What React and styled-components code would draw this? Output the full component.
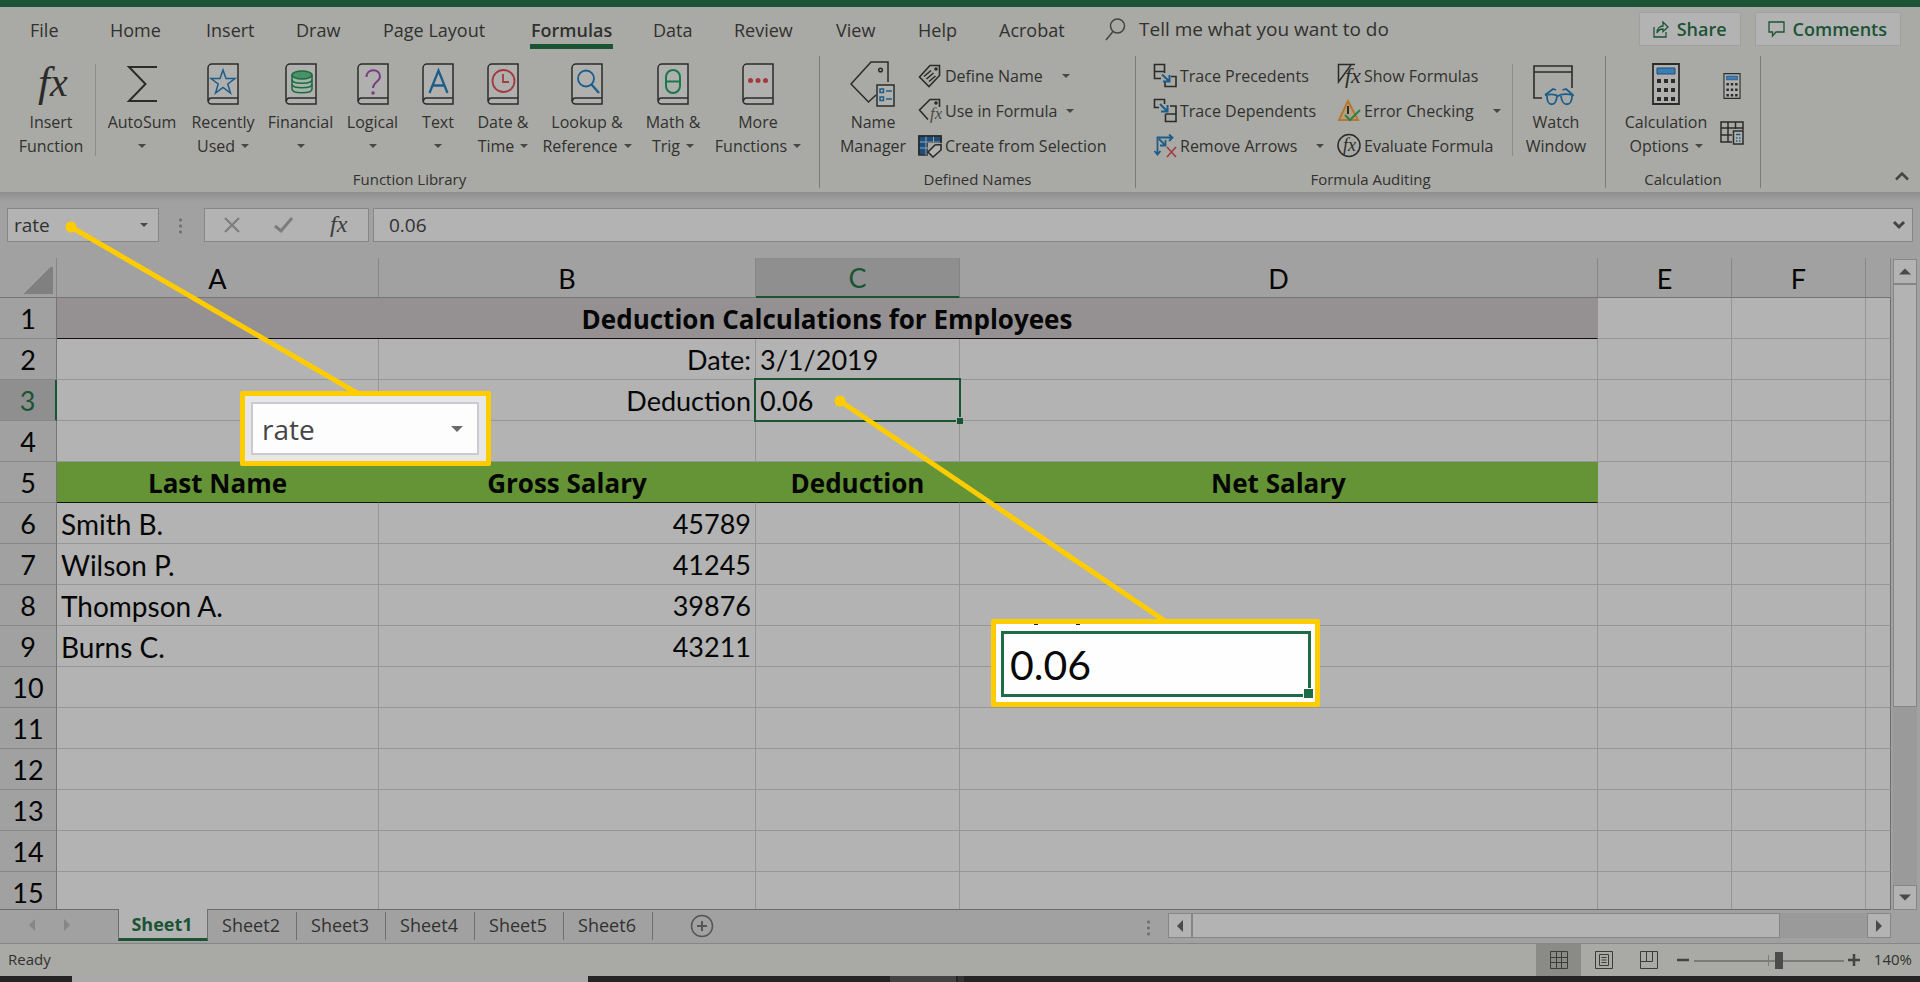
import React from 'react';
import styled, { createGlobalStyle, css } from 'styled-components';

const c = {
  ink: '#2b2b2a',
  text: '#31312f',
  ribbon: '#a9aaa5',
  chrome: '#a1a1a1',
  cell: '#b3b3b3',
  line: '#969696',
  edge: '#868686',
  green: '#1b5434',
  blue: '#1d5d8a',
  red: '#a33a3f',
  yellow: '#ffcc00',
};

const Global = createGlobalStyle`
  *, *::before, *::after { box-sizing: border-box; }
  body { margin: 0; background: ${c.chrome}; }
  button, input { font: inherit; color: inherit; background: none; border: 0; padding: 0; margin: 0; }
  svg { display: block; flex: none; }
`;

const Window = styled.div`
  position: relative;
  display: flex;
  flex-direction: column;
  height: 100vh;
  overflow: hidden;
  font-family: "Open Sans", "Noto Sans", sans-serif;
  font-size: 16px;
  color: ${c.text};
`;

const TitleStrip = styled.div`
  flex: none;
  height: 7px;
  background: ${c.green};
`;

/* ---------- ribbon ---------- */

const Ribbon = styled.header`
  flex: none;
  height: 185px;
  background: ${c.ribbon};
`;

const TabBar = styled.nav`
  display: flex;
  align-items: flex-start;
  height: 49px;
  padding: 5px 19px 0 29px;
  font-size: 18px;
  line-height: 34px;
`;

const TabSlot = styled.div`
  flex: none;
  width: ${(p) => p.$w}px;
`;

const Tab = styled.button`
  height: 37px;
  line-height: 34px;
  padding: 1px 1px 0;
  white-space: nowrap;
  border-bottom: 5px solid transparent;
  ${(p) =>
    p.$active &&
    css`
      font-weight: 600;
      border-bottom-color: ${c.green};
    `}
`;

const Search = styled.label`
  display: flex;
  gap: 13px;
  flex: 1;
  align-items: center;
  height: 34px;
  font-size: 19px;
`;

const SearchInput = styled.input`
  flex: 1;
  min-width: 0;
  outline: 0;
  &::placeholder { color: ${c.text}; opacity: 1; }
`;

const TopButton = styled.button`
  display: flex;
  align-items: center;
  gap: 8px;
  height: 34px;
  padding: 0 13px 0 12px;
  margin-left: 14px;
  background: ${c.cell};
  border: 1px solid #a0a19e;
  font-weight: 600;
  color: ${c.green};
`;

const Groups = styled.div`
  display: flex;
  height: 132px;
`;

const Group = styled.section`
  flex: none;
  display: flex;
  flex-direction: column;
  justify-content: space-between;
  width: ${(p) => p.$w}px;
  border-right: 1px solid #7b7b79;
`;

const GroupBody = styled.div`
  display: flex;
  height: 108px;
  padding-left: ${(p) => p.$pl}px;
`;

const GroupTitle = styled.h2`
  margin: 0;
  font-size: 15px;
  line-height: 18px;
  font-weight: 400;
  text-align: center;
  height: 18px;
`;

const BigButton = styled.button`
  flex: none;
  display: flex;
  flex-direction: column;
  align-items: center;
  width: ${(p) => p.$w}px;
  padding-top: 5px;
  line-height: 24px;
  white-space: nowrap;
`;

const BigIcon = styled.span`
  display: flex;
  align-items: center;
  justify-content: center;
  height: 46px;
  margin-bottom: 3px;
`;

const Line = styled.span`
  display: flex;
  align-items: center;
  gap: 6px;
  height: 24px;
`;

const Caret = styled.span`
  width: 0;
  height: 0;
  border: 4px solid transparent;
  border-top-color: #474746;
  border-bottom: 0;
`;

const Divider = styled.span`
  flex: none;
  width: 1px;
  height: 92px;
  margin: 8px 3px 0;
  background: #8d8e8a;
`;

const Stack = styled.div`
  flex: none;
  width: ${(p) => p.$w}px;
  padding-top: 2px;
`;

const SmallButton = styled.button`
  display: flex;
  align-items: center;
  gap: 3px;
  height: 35px;
  white-space: nowrap;
`;

const CaretGap = styled.span`
  display: flex;
  margin-left: ${(p) => p.$gap}px;
`;

const IconStack = styled.div`
  display: flex;
  flex-direction: column;
  align-items: center;
  gap: 22px;
  padding-top: 17px;
  width: 34px;
`;

const Collapse = styled.button`
  margin: auto 11px 7px auto;
`;

/* ---------- formula bar ---------- */

const FormulaBar = styled.div`
  flex: none;
  display: flex;
  height: 66px;
  padding: 16px 7px 16px 7px;
  background: linear-gradient(#8f8f8f, ${c.chrome} 10px);
  font-size: 19px;
`;

const Box = styled.div`
  display: flex;
  align-items: center;
  height: 34px;
  background: ${c.cell};
  border: 1px solid ${c.edge};
`;

const NameBox = styled(Box)`
  width: 152px;
  padding: 0 10px 0 6px;
`;

const BareInput = styled.input`
  flex: 1;
  min-width: 0;
  outline: 0;
`;

const Dots = styled.span`
  width: 3px;
  height: 17px;
  margin: 9px ${(p) => p.$right}px 0 ${(p) => p.$left}px;
  background: radial-gradient(circle, #6f6f6f 1px, transparent 2px) 0 0 / 3px 6px;
`;

const FxBox = styled(Box)`
  width: 165px;
  margin-right: 4px;
  padding: 0 16px 0 18px;
  justify-content: space-between;
`;

const FormulaBox = styled(Box)`
  flex: 1;
  padding: 0 6px 0 15px;
`;

/* ---------- sheet ---------- */

const SheetArea = styled.main`
  flex: 1;
  min-height: 0;
  display: flex;
  background: ${c.chrome};
`;

const GridWrap = styled.div`
  flex: 1;
  min-width: 0;
  overflow: hidden;
  border-bottom: 1px solid #6c6c6c;
`;

const Grid = styled.table`
  width: 100%;
  table-layout: fixed;
  border-collapse: separate;
  border-spacing: 0;
  font-family: Lato, "Open Sans", sans-serif;
  font-size: 27px;
  line-height: 38px;
  color: #060606;
`;

const ColHead = styled.th`
  height: 40px;
  padding: 1px 0 0;
  line-height: 37px;
  font-weight: 400;
  background: ${(p) => (p.$on ? '#8f8f8f' : c.chrome)};
  color: ${(p) => (p.$on ? c.green : 'inherit')};
  border-right: 1px solid ${c.edge};
  border-bottom: ${(p) => (p.$on ? `2px solid ${c.green}` : '1px solid #757575')};
`;

const Corner = styled(ColHead)`
  background: linear-gradient(135deg, transparent 50%, #808080 50%) 22px 9px / 31px 27px no-repeat;
`;

const RowHead = styled.th`
  height: 41px;
  padding: 2px 0 0;
  font-weight: 400;
  background: ${(p) => (p.$on ? '#8f8f8f' : c.chrome)};
  color: ${(p) => (p.$on ? c.green : 'inherit')};
  border-bottom: 1px solid ${c.edge};
  border-right: ${(p) => (p.$on ? `2px solid ${c.green}` : '1px solid #757575')};
`;

const Cell = styled.td`
  position: relative;
  height: 41px;
  padding: 2px 4px 0;
  white-space: nowrap;
  font-size: ${(p) => (p.$label ? 28 : 27)}px;
  text-align: ${(p) => p.$align || 'left'};
  background: ${c.cell};
  border-right: 1px solid ${(p) => (p.$edge ? '#6c6c6c' : c.line)};
  border-bottom: 1px solid ${c.line};
  ${(p) =>
    p.$fill &&
    css`
      background: ${p.$fill};
      font-family: "Open Sans", "Noto Sans", sans-serif;
      font-size: 26px;
      font-weight: 700;
      text-align: center;
      border-right-color: ${p.$fill};
      border-bottom-color: #111;
    `}
`;

const Selection = styled.span`
  position: absolute;
  z-index: 1;
  inset: -2px;
  border: 2px solid ${c.green};
  &::after {
    content: '';
    position: absolute;
    right: -4px;
    bottom: -4px;
    width: 7px;
    height: 7px;
    background: ${c.green};
    border-left: 1px solid ${c.cell};
    border-top: 1px solid ${c.cell};
  }
`;

const VScroll = styled.div`
  flex: none;
  display: flex;
  flex-direction: column;
  width: 24px;
  margin: 1px 3px 0 2px;
  background: #9a9a9a;
`;

const ScrollButton = styled.button`
  flex: none;
  display: flex;
  align-items: center;
  justify-content: center;
  width: 24px;
  height: 25px;
  background: ${c.cell};
  border: 1px solid ${c.edge};
`;

const Thumb = styled.div`
  flex: 0 0 ${(p) => p.$size};
  background: ${c.cell};
  border: 1px solid ${c.edge};
`;

const Fill = styled.div`
  flex: 1;
`;

/* ---------- sheet tabs ---------- */

const SheetBar = styled.div`
  flex: none;
  display: flex;
  height: 33px;
  padding-right: 29px;
  background: ${c.chrome};
  font-size: 18px;
`;

const SheetNav = styled.div`
  display: flex;
  align-items: center;
  gap: 29px;
  width: 118px;
  padding: 0 0 3px 29px;
`;

const SheetTab = styled.button`
  width: 89px;
  height: 28px;
  margin-top: 2px;
  padding: 0 2px 2px 0;
  line-height: 26px;
  border-right: 1px solid #6f6f6f;
  ${(p) =>
    p.$active &&
    css`
      width: 90px;
      height: 32px;
      margin-top: -1px;
      padding: 0 2px 0 0;
      font-weight: 700;
      color: ${c.green};
      background: ${c.cell};
      border-left: 1px solid #6f6f6f;
      border-bottom: 3px solid ${c.green};
    `}
`;

const AddSheet = styled.button`
  margin: 0 auto 0 37px;
  padding-bottom: 1px;
`;

const HScroll = styled.div`
  display: flex;
  flex: 0 1 723px;
  margin-top: 3px;
  height: 25px;
  background: #9a9a9a;
`;

/* ---------- status bar ---------- */

const Status = styled.footer`
  flex: none;
  display: flex;
  align-items: center;
  height: 33px;
  padding: 0 8px;
  background: ${c.ribbon};
  border-top: 1px solid ${c.edge};
  font-size: 15px;
`;

const ViewButton = styled.button`
  display: flex;
  align-items: center;
  justify-content: center;
  width: 45px;
  height: 32px;
  background: ${(p) => (p.$on ? '#8a8b87' : 'none')};
`;

const ZoomButton = styled.button`
  display: flex;
  align-items: center;
  width: 12px;
  height: 24px;
  margin-left: ${(p) => p.$ml}px;
`;

const ZoomRange = styled.input`
  appearance: none;
  width: 150px;
  height: 20px;
  margin-left: 5px;
  background:
    linear-gradient(#7b7b79, #7b7b79) 74px 5px / 1px 11px no-repeat,
    linear-gradient(#7b7b79, #7b7b79) 0 10px / 100% 2px no-repeat;
  &::-webkit-slider-thumb {
    appearance: none;
    width: 8px;
    height: 17px;
    background: #4c4c4a;
  }
`;

const StatusText = styled.span`
  padding-bottom: 2px;
`;

const ZoomValue = styled(StatusText)`
  width: 52px;
  text-align: right;
`;

const Taskbar = styled.div`
  flex: none;
  display: flex;
  height: 6px;
  background: #242424;
`;

const TaskPart = styled.span`
  width: ${(p) => p.$w}px;
  margin-left: ${(p) => p.$ml}px;
  background: ${(p) => p.$bg};
`;

/* ---------- callouts laid over the window ---------- */

const Leaders = styled.svg`
  position: absolute;
  z-index: 2;
  left: 0;
  top: 0;
  pointer-events: none;
`;

const Callout = styled.div`
  position: absolute;
  z-index: 3;
  left: ${(p) => p.$x}px;
  top: ${(p) => p.$y}px;
  border: 5px solid ${c.yellow};
  border-radius: 2px;
`;

const NameCallout = styled(Callout)`
  width: 251px;
  height: 75px;
  padding: 6px 7px 6px 6px;
  background: #e8e7e7;
`;

const NameZoom = styled.div`
  display: flex;
  align-items: center;
  justify-content: space-between;
  height: 53px;
  padding: 0 14px 0 9px;
  background: #fdfdfd;
  border: 2px solid #cbc9d1;
  font-size: 28px;
  color: #454545;
`;

const BigCaret = styled(Caret)`
  border-width: 6px 6px 0;
  border-top-color: #6a6a6a;
`;

const CellCallout = styled(Callout)`
  width: 329px;
  height: 88px;
  padding: 7px 4px 5px 5px;
  background:
    linear-gradient(#222, #222) 38px 0 / 4px 1px no-repeat,
    linear-gradient(#222, #222) 80px 0 / 4px 1px no-repeat,
    #fefefe;
`;

const CellZoom = styled.div`
  position: relative;
  height: 66px;
  padding-left: 6px;
  line-height: 62px;
  border: 3px solid #1f6b45;
  font-family: Lato, "Open Sans", sans-serif;
  font-size: 41px;
  color: #080808;
  &::after {
    content: '';
    position: absolute;
    right: -6px;
    bottom: -5px;
    width: 11px;
    height: 11px;
    background: #1f6b45;
    border: 1px solid #fefefe;
  }
`;

/* ---------- icons ---------- */

const Fx = ({ x, y, size, color = c.ink }) => (
  <text x={x} y={y} fontFamily="Liberation Serif, serif" fontStyle="italic" fontSize={size} fill={color}>fx</text>
);

const Book = ({ children }) => (
  <svg width="32" height="42" viewBox="0 0 32 42" fill="none" stroke={c.ink} strokeWidth="1.5">
    <path d="M5 1H31V41H4.5A3.5 3.5 0 0 1 1 37.5V5A4 4 0 0 1 5 1Z" fill="#b0b0ae" />
    <path d="M31 35H4.500A3 3 0 0 0 1.500 38" />
    {children}
  </svg>
);

const FxIcon = () => (
  <svg width="48" height="60" viewBox="0 0 48 60">
    <text x="11" y="42" fontFamily="Liberation Serif, serif" fontStyle="italic" fontSize="43" fill={c.ink}>f</text>
    <text x="23" y="42" fontFamily="Liberation Serif, serif" fontStyle="italic" fontSize="40" fill={c.ink}>x</text>
  </svg>
);

const SigmaIcon = () => (
  <svg width="32" height="38" viewBox="0 0 32 38" fill="none" stroke={c.ink} strokeWidth="2">
    <path d="M31 2H3L19.500 19L3 36H31" />
  </svg>
);

const RecentIcon = () => (
  <Book>
    <path d="M16 7L19 15.500H28L20.800 21L23.500 30L16 24.500L8.500 30L11.200 21L4 15.500H13Z" stroke={c.blue} />
  </Book>
);

const FinancialIcon = () => (
  <Book>
    <g stroke="#1c6b42">
      <path d="M7 12V26C7 31 27 31 27 26V12" fill="#a3b5a8" />
      <ellipse cx="17" cy="12" rx="10" ry="4" fill="#4c9068" />
      <path d="M7 16.500C7 21.500 27 21.500 27 16.500M7 21C7 26 27 26 27 21" />
    </g>
  </Book>
);

const LogicalIcon = () => (
  <Book>
    <path d="M9.500 14C9.500 5 23 5 23 13.500C23 19 16 18.500 16 25" stroke="#7b3a86" strokeWidth="2" />
    <circle cx="16" cy="30" r="1" fill="#7b3a86" stroke="#7b3a86" />
  </Book>
);

const TextIcon = () => (
  <Book>
    <path d="M7.500 30L16.500 7.500L25.500 30M10.500 22.500H22.500" stroke={c.blue} strokeWidth="2.300" />
  </Book>
);

const DateIcon = () => (
  <Book>
    <circle cx="16.500" cy="18" r="11" stroke={c.red} strokeWidth="1.800" />
    <path d="M16 11V19H22" stroke={c.red} strokeWidth="1.800" />
  </Book>
);

const LookupIcon = () => (
  <Book>
    <circle cx="15" cy="15.500" r="8" stroke={c.blue} strokeWidth="1.800" />
    <path d="M20.500 21.500L28 30" stroke={c.blue} strokeWidth="2.300" />
  </Book>
);

const MathIcon = () => (
  <Book>
    <rect x="9" y="7" width="14" height="23" rx="7" stroke="#18794a" strokeWidth="2" />
    <path d="M9 18.500H23" stroke="#18794a" strokeWidth="2" />
  </Book>
);

const MoreIcon = () => (
  <Book>
    <g fill={c.red} stroke="none">
      <circle cx="8.500" cy="17.500" r="2.500" />
      <circle cx="16" cy="17.500" r="2.500" />
      <circle cx="23.500" cy="17.500" r="2.500" />
    </g>
  </Book>
);

const NameManagerIcon = () => (
  <svg width="46" height="46" viewBox="0 0 46 46" fill="none" stroke={c.ink} strokeWidth="1.500">
    <path d="M38 21V1H21L1 23L18.500 41L26 34" />
    <circle cx="30.500" cy="9" r="1.800" />
    <path d="M27 24H44V45H27Z" fill="#b0b0ae" />
    <g stroke={c.blue}>
      <path d="M30 28H33.500V31.500H30ZM30 36H33.500V39.500H30ZM36 30H42M36 38H42" />
    </g>
  </svg>
);

const DefineIcon = () => (
  <svg width="24" height="24" viewBox="0 0 24 24" fill="none" stroke={c.ink} strokeWidth="1.600">
    <path d="M12 1.500H21.500V11.500L11 22.500L1.500 13Z" />
    <circle cx="18" cy="5" r="1" fill={c.ink} />
    <path d="M6 12.500L13 6.500M8.500 15L15.500 9M11 17.500L17.500 12" />
  </svg>
);

const UseIcon = () => (
  <svg width="24" height="25" viewBox="0 0 24 25" fill="none" stroke={c.ink} strokeWidth="1.600">
    <path d="M21.500 9V1.500H12L1.500 12L10 21.500" />
    <circle cx="18" cy="5" r="1" fill={c.ink} />
    <g stroke="none"><Fx x="12" y="21" size="17" color="#4a4a48" /></g>
  </svg>
);

const CreateIcon = () => (
  <svg width="24" height="24" viewBox="0 0 24 24" fill="none" stroke={c.ink} strokeWidth="1.600">
    <path d="M1 2H23V8H9V21H1Z" fill="#1c4f7d" />
    <path d="M1 8H23M1 14H11M8 2V21M15.500 2V8" stroke="#8fa6b8" strokeWidth="1" />
    <path d="M1 21V2H23V9" />
    <path d="M17 11L23 10.500V16L15 23L10 18Z" fill={c.cell} />
  </svg>
);

const PrecedentsIcon = () => (
  <svg width="24" height="25" viewBox="0 0 24 25" fill="none" stroke={c.ink} strokeWidth="1.600">
    <path d="M8 15.500H1.500V1.500H11.500V10M1.500 8.500H11.500M18 13.500H23V23.500H12V18" />
    <path d="M9 11.500L16 18M16.500 12V18.500H10" stroke={c.blue} strokeWidth="2" />
  </svg>
);

const DependentsIcon = () => (
  <svg width="24" height="25" viewBox="0 0 24 25" fill="none" stroke={c.ink} strokeWidth="1.600">
    <path d="M6 9.500H1.500V1.500H11.500V6M17 8H23V23.500H12.500V16M12.500 16H23" />
    <path d="M7 6L14 13M14.500 7V13.500H8" stroke={c.blue} strokeWidth="2" />
  </svg>
);

const RemoveIcon = () => (
  <svg width="24" height="24" viewBox="0 0 24 24" fill="none" strokeWidth="1.800">
    <g stroke={c.blue}>
      <path d="M4.500 20V3.500H19M16 0.500L19.500 3.500L16 7M1.500 17L4.500 20.500L7.500 17M6 5L12 11M12.500 6V11.500H7" />
    </g>
    <path d="M14 13L23 23M23 13L14 23" stroke={c.red} strokeWidth="1.600" />
  </svg>
);

const ShowIcon = () => (
  <svg width="24" height="25" viewBox="0 0 24 25" fill="none" stroke={c.ink} strokeWidth="1.500">
    <path d="M18 1.500H1.500V19L14 2" />
    <g stroke="none"><Fx x="8" y="20" size="22" /></g>
  </svg>
);

const ErrorIcon = () => (
  <svg width="24" height="25" viewBox="0 0 24 25" fill="none" strokeWidth="2">
    <path d="M11 3L21 22H2Z" fill="#b5a182" stroke="#b87730" />
    <path d="M11 8V16" stroke={c.ink} />
    <path d="M8 17L13 22L23 12" stroke="#26834c" />
  </svg>
);

const EvaluateIcon = () => (
  <svg width="24" height="25" viewBox="0 0 24 25" fill="none" stroke={c.ink} strokeWidth="1.500">
    <circle cx="12" cy="12.500" r="11" />
    <g stroke="none"><Fx x="6" y="17.500" size="18" /></g>
  </svg>
);

const WatchIcon = () => (
  <svg width="46" height="46" viewBox="0 0 46 46" fill="none" stroke={c.ink} strokeWidth="1.600">
    <path d="M39 27V5H1V37H9M1 11H39" />
    <g stroke={c.blue} strokeWidth="1.800">
      <path d="M12 34L20 28L23 29M40 34L33 28L29.500 29M12 34.500C17 33 22 33 25 35C28 33 35 33 41 34.500" />
      <path d="M14 35C14 46 23 46 24 35M28 35C29 46 39 46 39 35" />
    </g>
  </svg>
);

const CalcIcon = ({ w = 28, h = 42 }) => (
  <svg width={w} height={h} viewBox="0 0 28 42" fill="none">
    <path d="M1 1H27V41H1Z" stroke={c.ink} strokeWidth="1.800" fill="#b0b0ae" />
    <path d="M5 5H23V11H5Z" fill="#3b7eb3" stroke="#1c4f7d" />
    <path d="M5 16H9V20H5ZM12 16H16V20H12ZM19 16H23V20H19ZM5 25H9V29H5ZM12 25H16V29H12ZM19 25H23V29H19ZM5 34H9V38H5ZM12 34H16V38H12ZM19 34H23V38H19Z" fill={c.ink} />
  </svg>
);

const CalcSheetIcon = () => (
  <svg width="24" height="24" viewBox="0 0 24 24" fill="none" stroke={c.ink} strokeWidth="1.500">
    <path d="M12 21H1V1H23V9M1 7H23M1 14H12M8 1V21M15.500 1V8" />
    <path d="M13.500 10H23V23H13.500Z" fill="#b0b0ae" />
    <path d="M16 13.500H20.500M16 17H17.500M19 17H20.500M16 20H17.500M19 20H20.500" stroke={c.blue} />
  </svg>
);

const Tri = ({ d, color = '#4a4a4a', w = 12, h = 12 }) => (
  <svg width={w} height={h} viewBox="0 0 12 12" preserveAspectRatio="none" fill={color}><path d={d} /></svg>
);

/* ---------- data ---------- */

const TABS = [
  ['File', 80], ['Home', 96], ['Insert', 90], ['Draw', 87], ['Page Layout', 148],
  ['Formulas', 122], ['Data', 81], ['Review', 102], ['View', 82], ['Help', 81], ['Acrobat', 107],
];

const LIBRARY = [
  [SigmaIcon, 86, 'AutoSum', '', true],
  [RecentIcon, 76, 'Recently', 'Used', true],
  [FinancialIcon, 79, 'Financial', '', true],
  [LogicalIcon, 65, 'Logical', '', true],
  [TextIcon, 66, 'Text', '', true],
  [DateIcon, 64, 'Date &', 'Time', true],
  [LookupIcon, 104, 'Lookup &', 'Reference', true],
  [MathIcon, 68, 'Math &', 'Trig', true],
  [MoreIcon, 102, 'More', 'Functions', true],
];

const NAMES = [
  [DefineIcon, 'Define Name', 16],
  [UseIcon, 'Use in Formula', 6],
  [CreateIcon, 'Create from Selection'],
];
const TRACE = [
  [PrecedentsIcon, 'Trace Precedents'],
  [DependentsIcon, 'Trace Dependents'],
  [RemoveIcon, 'Remove Arrows', 16],
];
const AUDIT = [
  [ShowIcon, 'Show Formulas'],
  [ErrorIcon, 'Error Checking', 16],
  [EvaluateIcon, 'Evaluate Formula'],
];

const COLUMNS = [['A', 322], ['B', 377], ['C', 204], ['D', null], ['E', 134], ['F', 134], ['', 25]];

const VALUES = {
  B2: 'Date:', C2: '3/1/2019', B3: 'Deduction', C3: '0.06',
  A5: 'Last Name', B5: 'Gross Salary', C5: 'Deduction', D5: 'Net Salary',
  A6: 'Smith B.', B6: '45789', A7: 'Wilson P.', B7: '41245',
  A8: 'Thompson A.', B8: '39876', A9: 'Burns C.', B9: '43211',
};

const Big = ({ item: [Icon, w, a, b, menu] }) => (
  <BigButton type="button" $w={w}>
    <BigIcon><Icon /></BigIcon>
    <Line>{a}</Line>
    <Line>{b}{menu && <Caret />}</Line>
  </BigButton>
);

const SmallStack = ({ w, items }) => (
  <Stack $w={w}>
    {items.map(([Icon, label, gap]) => (
      <SmallButton type="button" key={label}>
        <Icon />
        {label}
        {gap && <CaretGap $gap={gap}><Caret /></CaretGap>}
      </SmallButton>
    ))}
  </Stack>
);

const Row = ({ n }) => (
  <tr>
    <RowHead scope="row" $on={n === 3}>{n}</RowHead>
    {n === 1 && <Cell colSpan={4} $fill="#959192">Deduction Calculations for Employees</Cell>}
    {COLUMNS.map(([col], i) => {
      if (n === 1 && i < 4) return null;
      const fill = n === 5 && i < 4 ? '#649435' : undefined;
      return (
        <Cell key={i} $fill={fill} $edge={i === 6} $label={i === 0} $align={col === 'B' ? 'right' : 'left'}>
          {VALUES[col + n]}
          {col === 'C' && n === 3 && <Selection />}
        </Cell>
      );
    })}
  </tr>
);

export default function App() {
  return (
    <Window>
      <Global />
      <TitleStrip />
      <Ribbon>
        <TabBar>
          {TABS.map(([label, w]) => (
            <TabSlot key={label} $w={w}>
              <Tab type="button" $active={label === 'Formulas'}>{label}</Tab>
            </TabSlot>
          ))}
          <Search>
            <svg width="21" height="23" viewBox="0 0 21 23" fill="none" stroke="#444" strokeWidth="1.500">
              <circle cx="12.500" cy="8" r="7" />
              <path d="M8 13.500L1 22" />
            </svg>
            <SearchInput aria-label="Search" placeholder="Tell me what you want to do" />
          </Search>
          <TopButton type="button">
            <svg width="17" height="18" viewBox="0 0 17 18" fill="none" stroke={c.green} strokeWidth="1.300">
              <path d="M2 7V17H14V12" />
              <path d="M5 13C5 8 8 6 11 6V2L16 7L11 11.500V9C8 9 6 10 5 13Z" />
            </svg>
            Share
          </TopButton>
          <TopButton type="button">
            <svg width="17" height="18" viewBox="0 0 17 18" fill="none" stroke={c.green} strokeWidth="1.300">
              <path d="M1 2H16V12H8L4.500 16V12H1Z" />
            </svg>
            Comments
          </TopButton>
        </TabBar>
        <Groups>
          <Group $w={820}>
            <GroupBody $pl={10}>
              <Big item={[FxIcon, 82, 'Insert', 'Function', false]} />
              <Divider />
              {LIBRARY.map((item) => <Big key={item[2]} item={item} />)}
            </GroupBody>
            <GroupTitle>Function Library</GroupTitle>
          </Group>
          <Group $w={316}>
            <GroupBody $pl={8}>
              <Big item={[NameManagerIcon, 90, 'Name', 'Manager', false]} />
              <SmallStack w={215} items={NAMES} />
            </GroupBody>
            <GroupTitle>Defined Names</GroupTitle>
          </Group>
          <Group $w={470}>
            <GroupBody $pl={17}>
              <SmallStack w={184} items={TRACE} />
              <SmallStack w={172} items={AUDIT} />
              <Divider />
              <Big item={[WatchIcon, 80, 'Watch', 'Window', false]} />
            </GroupBody>
            <GroupTitle>Formula Auditing</GroupTitle>
          </Group>
          <Group $w={155}>
            <GroupBody $pl={11}>
              <Big item={[CalcIcon, 98, 'Calculation', 'Options', true]} />
              <IconStack>
                <button type="button" aria-label="Calculate Now"><CalcIcon w={18} h={26} /></button>
                <button type="button" aria-label="Calculate Sheet"><CalcSheetIcon /></button>
              </IconStack>
            </GroupBody>
            <GroupTitle>Calculation</GroupTitle>
          </Group>
          <Collapse type="button" aria-label="Collapse the Ribbon">
            <svg width="14" height="10" viewBox="0 0 14 10" fill="none" stroke="#444" strokeWidth="2.500">
              <path d="M1 8.500L7 2.500L13 8.500" />
            </svg>
          </Collapse>
        </Groups>
      </Ribbon>

      <FormulaBar>
        <NameBox>
          <BareInput aria-label="Name Box" defaultValue="rate" />
          <Caret />
        </NameBox>
        <Dots $left={20} $right={22} />
        <FxBox>
          <button type="button" aria-label="Cancel">
            <svg width="18" height="18" viewBox="0 0 18 18" fill="none" stroke="#7c7c7c" strokeWidth="2">
              <path d="M2 2L16 16M16 2L2 16" />
            </svg>
          </button>
          <button type="button" aria-label="Enter">
            <svg width="20" height="18" viewBox="0 0 20 18" fill="none" stroke="#7c7c7c" strokeWidth="3">
              <path d="M1 10L7 15L18 2" />
            </svg>
          </button>
          <button type="button" aria-label="Insert Function">
            <svg width="26" height="30" viewBox="0 0 26 30"><Fx x="4" y="22" size="24" color="#3c3c3c" /></svg>
          </button>
        </FxBox>
        <FormulaBox>
          <BareInput aria-label="Formula" defaultValue="0.06" />
          <svg width="14" height="10" viewBox="0 0 14 10" fill="none" stroke="#444" strokeWidth="3">
            <path d="M2 2L7 7L12 2" />
          </svg>
        </FormulaBox>
      </FormulaBar>

      <SheetArea>
        <GridWrap>
          <Grid>
            <colgroup>
              <col width="57" />
              {COLUMNS.map(([, w], i) => <col key={i} width={w || undefined} />)}
            </colgroup>
            <thead>
              <tr>
                <Corner aria-label="Select all" />
                {COLUMNS.map(([label], i) => (
                  <ColHead key={i} scope="col" $on={label === 'C'}>{label}</ColHead>
                ))}
              </tr>
            </thead>
            <tbody>
              {Array.from({ length: 15 }, (_, i) => <Row key={i} n={i + 1} />)}
            </tbody>
          </Grid>
        </GridWrap>
        <VScroll>
          <ScrollButton type="button" aria-label="Scroll up"><Tri d="M0 10L6 2L12 10Z" h={9} /></ScrollButton>
          <Thumb $size="65%" />
          <Fill />
          <ScrollButton type="button" aria-label="Scroll down"><Tri d="M0 2L6 10L12 2Z" h={9} /></ScrollButton>
        </VScroll>
      </SheetArea>

      <SheetBar>
        <SheetNav>
          <button type="button" aria-label="Previous sheet"><Tri d="M12 0V12L0 6Z" w={6} color="#868686" /></button>
          <button type="button" aria-label="Next sheet"><Tri d="M0 0V12L12 6Z" w={6} color="#868686" /></button>
        </SheetNav>
        {[1, 2, 3, 4, 5, 6].map((n) => (
          <SheetTab type="button" key={n} $active={n === 1}>Sheet{n}</SheetTab>
        ))}
        <AddSheet type="button" aria-label="New sheet">
          <svg width="24" height="24" viewBox="0 0 24 24" fill="none" stroke="#555" strokeWidth="1.500">
            <circle cx="12" cy="12" r="10.500" />
            <path d="M12 7V17M7 12H17" strokeWidth="2" />
          </svg>
        </AddSheet>
        <Dots $left={0} $right={18} />
        <HScroll>
          <ScrollButton type="button" aria-label="Scroll left"><Tri d="M12 0V12L0 6Z" w={6} /></ScrollButton>
          <Thumb $size="588px" />
          <Fill />
          <ScrollButton type="button" aria-label="Scroll right"><Tri d="M0 0V12L12 6Z" w={6} /></ScrollButton>
        </HScroll>
      </SheetBar>

      <Status>
        <StatusText>Ready</StatusText>
        <Fill />
        <ViewButton type="button" $on aria-label="Normal">
          <svg width="20" height="20" viewBox="0 0 20 20" fill="none" stroke="#3c3c3a" strokeWidth="1">
            <path d="M1.500 1.500H18.500V18.500H1.500ZM1.500 7.500H18.500M1.500 12.500H18.500M7.500 1.500V18.500M12.500 1.500V18.500" />
          </svg>
        </ViewButton>
        <ViewButton type="button" aria-label="Page Layout">
          <svg width="20" height="20" viewBox="0 0 20 20" fill="none" stroke="#3c3c3a" strokeWidth="1">
            <path d="M1.500 1.500H18.500V18.500H1.500ZM5.500 4.500H14.500V15.500H5.500ZM7.500 7.500H12.500M7.500 10H12.500M7.500 12.500H12.500" />
          </svg>
        </ViewButton>
        <ViewButton type="button" aria-label="Page Break Preview">
          <svg width="20" height="20" viewBox="0 0 20 20" fill="none" stroke="#3c3c3a" strokeWidth="1">
            <path d="M1.500 1.500H18.500V18.500H1.500ZM1.500 11.500H13.500V1.500M7.500 1.500V11.500" />
          </svg>
        </ViewButton>
        <ZoomButton type="button" $ml={6} aria-label="Zoom out">
          <svg width="12" height="12" viewBox="0 0 12 12" stroke="#444" strokeWidth="2.500"><path d="M0 6H12" /></svg>
        </ZoomButton>
        <ZoomRange type="range" aria-label="Zoom" min="0" max="100" defaultValue="57" />
        <ZoomButton type="button" $ml={4} aria-label="Zoom in">
          <svg width="12" height="12" viewBox="0 0 12 12" stroke="#444" strokeWidth="2.500"><path d="M0 6H12M6 0V12" /></svg>
        </ZoomButton>
        <ZoomValue>140%</ZoomValue>
      </Status>

      <Taskbar>
        <TaskPart $w={516} $ml={72} $bg="#a9a9a9" />
        <TaskPart $w={66} $ml={302} $bg="#434343" />
        <TaskPart $w={6} $ml={2} $bg="#343434" />
      </Taskbar>

      <Leaders width="1320" height="640" viewBox="0 0 1320 640" stroke={c.yellow} strokeWidth="5" fill={c.yellow}>
        <path d="M71 227L357 393M840 401L1165 621" />
        <circle cx="71" cy="227" r="3" />
        <circle cx="840" cy="401" r="3" />
      </Leaders>
      <NameCallout $x={240} $y={391}>
        <NameZoom>rate<BigCaret /></NameZoom>
      </NameCallout>
      <CellCallout $x={991} $y={619}>
        <CellZoom>0.06</CellZoom>
      </CellCallout>
    </Window>
  );
}
